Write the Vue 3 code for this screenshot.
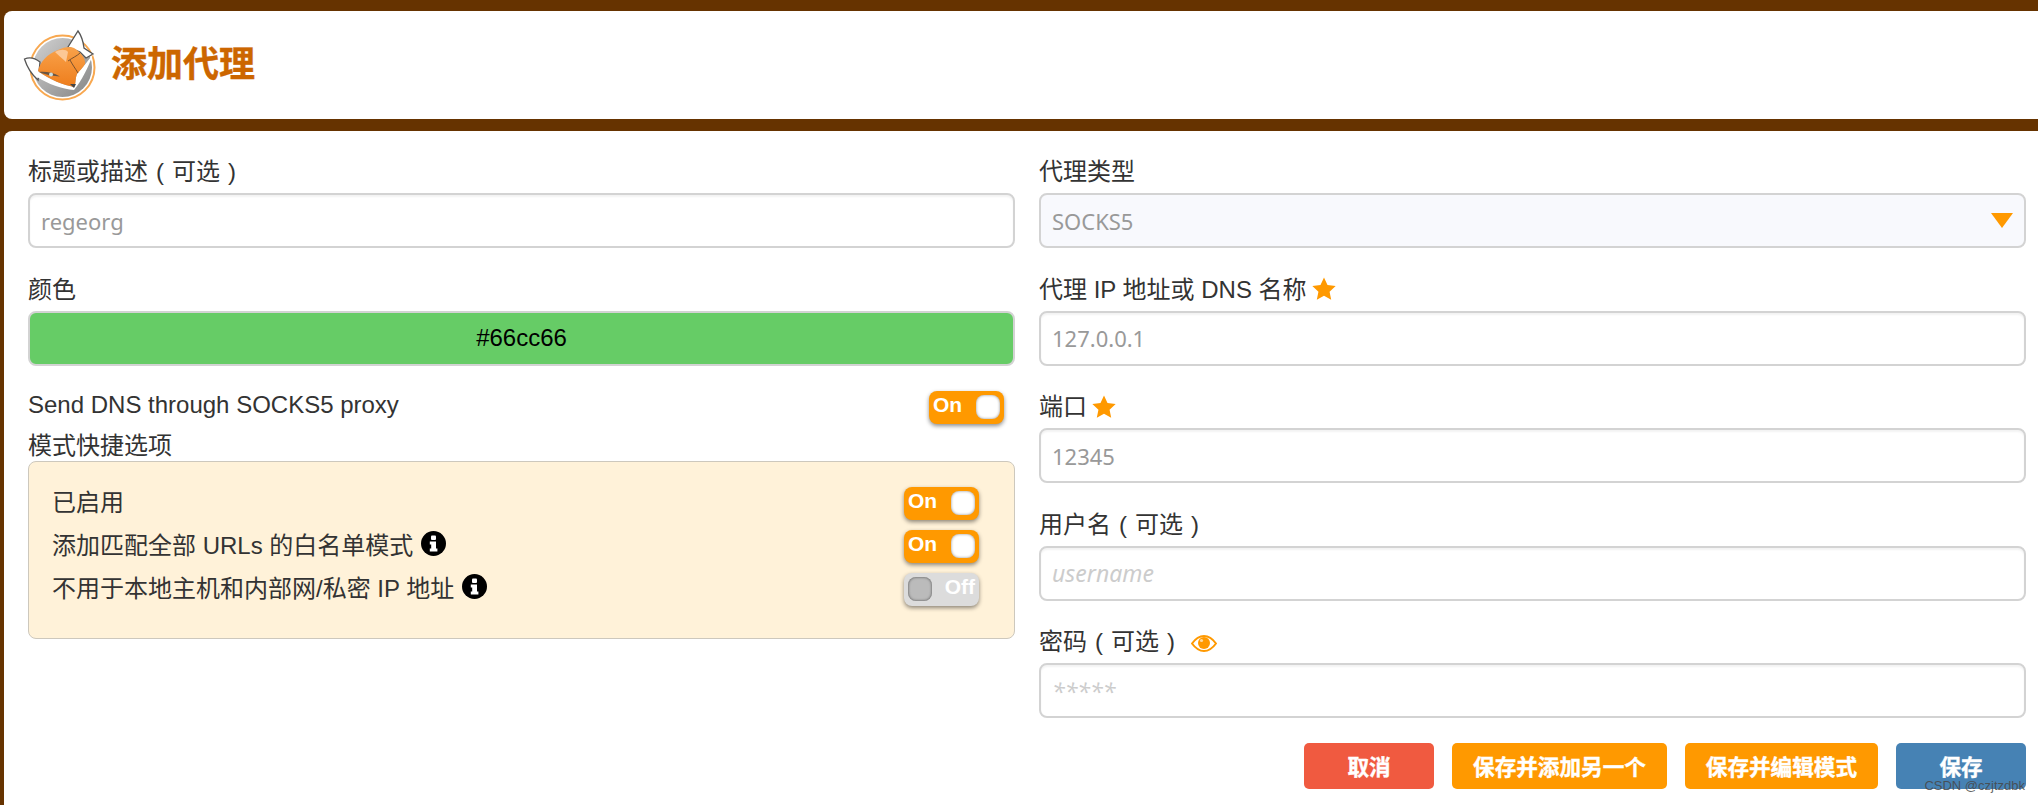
<script setup>
const shortcuts = [
  { label: '已启用', on: true, info: false },
  { label: '添加匹配全部 URLs 的白名单模式', on: true, info: true },
  { label: '不用于本地主机和内部网/私密 IP 地址', on: false, info: true }
]
</script>

<template>
  <div class="page">
    <header class="head">
      <svg class="logo" viewBox="20 26 76 74" width="76" height="74" aria-hidden="true">
        <defs>
          <linearGradient id="disc" x1="0" y1="0" x2="1" y2="1">
            <stop offset="0" stop-color="#d2d2d2" />
            <stop offset="1" stop-color="#858585" />
          </linearGradient>
          <linearGradient id="face" x1="0" y1="0" x2="0" y2="1">
            <stop offset="0" stop-color="#f9a24a" />
            <stop offset="1" stop-color="#ee7d1c" />
          </linearGradient>
        </defs>
        <circle cx="60.5" cy="65.5" r="32" fill="#fff" stroke="#f8a850" stroke-width="2" />
        <circle cx="60.5" cy="65.5" r="29.5" fill="url(#disc)" />
        <path d="M22.5 57 C27 55 33 56 38 60 L37 70 C37 75 36 77 36 78 C29 72 25 65 22.5 57Z" fill="#fff" stroke="#555" stroke-width="1.3" />
        <path d="M66 45 L76 29 C79 33 81 38 82 46 L91 52 L84 56 L78 50Z" fill="#fff" stroke="#555" stroke-width="1.3" />
        <path d="M91 52 C86 66 80 78 72 88 C60 87 46 82 35 75 L36 69 C48 78 62 83 72 85 C74 82 73 77 75 72 C78 68 84 62 91 52Z" fill="#fff" />
        <path d="M36 69 C38 60 45 52 56 48 C62 45 68 44 72 46 C78 50 84 56 83 62 C81 66 77 69 75 72 C73 77 74 82 72 85 C62 83 48 78 36 69Z" fill="url(#face)" />
        <path d="M53 50 C58 47 64 47 66 50 L64 60 C60 56 56 53 53 50Z" fill="#fcc896" />
        <path d="M66 59 C70 56 75 54 78 51 M76 71 C73 66 70 62 68 58" fill="none" stroke="#6b4a2c" stroke-width="0.9" />
        <path d="M37 70 C43 69.5 51 70 58 74.5 C52 74 45 73.5 37 70Z" fill="#6a5644" />
        <circle cx="49" cy="72.5" r="2" fill="#cfe0e0" />
        <path d="M68 82 L74 82 L72 86Z" fill="#444" />
      </svg>
      <h1 class="title">添加代理</h1>
    </header>

    <main class="main">
      <div class="form">
        <section class="col">
          <div class="field">
            <label class="lab">标题或描述<span class="par">(</span>可选<span class="par">)</span></label>
            <input class="inp" placeholder="regeorg" />
          </div>
          <div class="field">
            <label class="lab">颜色</label>
            <button class="color">#66cc66</button>
          </div>
          <div class="send">
            <span class="sendtext">Send DNS through SOCKS5 proxy</span>
            <span class="tog on"><b>On</b><i class="knob"></i></span>
          </div>
          <div class="boxlab">模式快捷选项</div>
          <div class="box">
            <div v-for="s in shortcuts" :key="s.label" class="row">
              <span class="rowtext">
                {{ s.label }}
                <svg v-if="s.info" class="info" viewBox="0 0 25 25" width="25" height="25" aria-hidden="true">
                  <circle cx="12.5" cy="12.5" r="12.5" fill="#000" />
                  <rect x="10" y="4.5" width="5" height="4.5" rx="1" fill="#fff" />
                  <path d="M8.8 10.5h6.2v7h1.4v3H8.8v-3h1.4v-4H8.8z" fill="#fff" />
                </svg>
              </span>
              <span class="tog" :class="s.on ? 'on' : 'off'">
                <template v-if="s.on"><b>On</b><i class="knob"></i></template>
                <template v-else><i class="knob"></i><b>Off</b></template>
              </span>
            </div>
          </div>
        </section>

        <section class="col">
          <div class="field">
            <label class="lab">代理类型</label>
            <div class="inp sel">SOCKS5<i class="arrow"></i></div>
          </div>
          <div class="field">
            <label class="lab">代理 IP 地址或 DNS 名称
              <svg class="star" viewBox="0 0 22 21" width="24" height="23" aria-hidden="true"><path d="M11 0.5l3.2 6.9 7.5.9-5.6 5.1 1.5 7.4L11 17.1l-6.6 3.7 1.5-7.4L.3 8.3l7.5-.9z" fill="#ff9900" /></svg>
            </label>
            <input class="inp" placeholder="127.0.0.1" />
          </div>
          <div class="field">
            <label class="lab">端口
              <svg class="star" viewBox="0 0 22 21" width="24" height="23" aria-hidden="true"><path d="M11 0.5l3.2 6.9 7.5.9-5.6 5.1 1.5 7.4L11 17.1l-6.6 3.7 1.5-7.4L.3 8.3l7.5-.9z" fill="#ff9900" /></svg>
            </label>
            <input class="inp" placeholder="12345" />
          </div>
          <div class="field">
            <label class="lab">用户名<span class="par">(</span>可选<span class="par">)</span></label>
            <input class="inp it" placeholder="username" />
          </div>
          <div class="field">
            <label class="lab">密码<span class="par">(</span>可选<span class="par">)</span>
              <svg class="eye" viewBox="0 0 26 17" width="26" height="17" aria-hidden="true">
                <path d="M1 8.5C5 3 9 1 13 1s8 2 12 7.5C21 14 17 16 13 16S5 14 1 8.5z" fill="#fff" stroke="#ff9900" stroke-width="2" />
                <circle cx="13" cy="8" r="6" fill="#ff9900" />
                <circle cx="10.5" cy="5.5" r="1.6" fill="#ffd9a0" />
              </svg>
            </label>
            <input class="inp it" placeholder="*****" />
          </div>
        </section>
      </div>

      <div class="actions">
        <button class="btn red">取消</button>
        <button class="btn org">保存并添加另一个</button>
        <button class="btn org">保存并编辑模式</button>
        <button class="btn blue">保存</button>
      </div>
    </main>
    <span class="mark">CSDN @czjtzdbk</span>
  </div>
</template>

<style>
html, body { margin: 0; background: #663300; height: 805px; overflow: hidden; }
</style>

<style scoped>
.page {
  position: relative;
  height: 805px;
  box-sizing: border-box;
  padding: 11px 0 0 4px;
  background: #663300;
  font-family: "Liberation Sans", "Noto Sans CJK SC", sans-serif;
  font-size: 24px;
  color: #333;
  overflow: hidden;
}
.head {
  height: 108px;
  display: flex;
  align-items: center;
  gap: 13px;
  padding-left: 18px;
  background: #fff;
  border-radius: 8px 0 0 8px;
}
.logo { flex: none; }
.title {
  margin: 0;
  font-size: 36px;
  font-weight: 700;
  line-height: 1;
  color: #cc6600;
  -webkit-text-stroke: 0.4px #cc6600;
}
.main {
  margin-top: 12px;
  height: 674px;
  box-sizing: border-box;
  padding: 23px 12px 0 24px;
  background: #fff;
  border-radius: 8px 0 0 0;
}
.form {
  display: grid;
  grid-template-columns: 1fr 1fr;
  gap: 24px;
}
.col { min-width: 0; }
.field { margin-bottom: 23.5px; }
.lab {
  display: flex;
  align-items: center;
  height: 39px;
  line-height: 36px;
  padding-bottom: 3px;
  box-sizing: border-box;
}
.par { display: inline-block; width: 24px; text-align: center; }
.star { margin-left: 5px; margin-top: -2px; }
.eye { margin-left: 8px; margin-top: 3px; }
.inp {
  display: block;
  width: 100%;
  height: 55px;
  box-sizing: border-box;
  padding: 0 11px;
  border: 2px solid #d3d3d3;
  border-radius: 8px;
  background: #fff;
  box-shadow: inset 0 2px 2px rgba(0, 0, 0, 0.05);
  font-family: "Noto Sans", "Noto Sans CJK SC", sans-serif;
  font-size: 22px;
  color: #999;
  outline: none;
}
.inp::placeholder { color: #999; opacity: 1; }
.it { font-style: italic; font-size: 23px; }
.it::placeholder { color: #ccc; }
.sel {
  display: flex;
  align-items: center;
  justify-content: space-between;
  background: #f8f9fd;
  box-shadow: none;
}
.arrow {
  width: 0;
  height: 0;
  border-left: 11px solid transparent;
  border-right: 11px solid transparent;
  border-top: 15px solid #ff9900;
}
.color {
  display: block;
  width: 100%;
  height: 55px;
  box-sizing: border-box;
  border: 2px solid #d3d3d3;
  border-radius: 8px;
  background: #66cc66;
  font-family: "Liberation Sans", sans-serif;
  font-size: 24px;
  color: #000;
  padding: 0;
}
.send {
  display: flex;
  align-items: center;
  justify-content: space-between;
  height: 36px;
  padding-right: 11px;
}
.sendtext { margin-top: -5px; }
.boxlab { height: 35.5px; line-height: 36px; padding-top: 3px; box-sizing: border-box; }
.box {
  height: 178px;
  box-sizing: border-box;
  padding: 20px 35px 0 23px;
  border: 1px solid #cdc8bd;
  border-radius: 8px;
  background: #fff2d9;
}
.row {
  display: flex;
  align-items: center;
  justify-content: space-between;
  height: 43px;
}
.rowtext { display: flex; align-items: center; gap: 8px; margin-top: -5px; }
.info { flex: none; margin-top: -1px; }
.tog {
  display: flex;
  align-items: center;
  justify-content: space-between;
  width: 75px;
  height: 33px;
  box-sizing: border-box;
  padding: 0 4px;
  border-radius: 8px;
  color: #fff;
  font-size: 21px;
  box-shadow: 0 2px 4px rgba(0, 0, 0, 0.45);
}
.tog b { font-weight: 700; margin-top: -4px; }
.on { background: #ff9900; }
.off { background: #dcdcdc; }
.knob {
  display: block;
  width: 24px;
  height: 24px;
  box-sizing: border-box;
  border-radius: 8px;
  background: #fff;
  box-shadow: inset 0 0 3px rgba(0, 0, 0, 0.45);
}
.off .knob { background: #bbb; box-shadow: inset 0 0 3px rgba(0, 0, 0, 0.6); }
.actions {
  display: flex;
  justify-content: flex-end;
  gap: 18px;
  margin-top: 1px;
}
.btn {
  height: 46px;
  min-width: 130px;
  box-sizing: border-box;
  padding: 0 21px;
  border: 0;
  border-radius: 5px;
  color: #fff;
  font-family: "Liberation Sans", "Noto Sans CJK SC", sans-serif;
  font-size: 21.6px;
  font-weight: 700;
  -webkit-text-stroke: 0.4px #fff;
}
.red { background: #f05a40; }
.org { background: #ff9900; }
.blue { background: #4682b4; }
.mark {
  position: absolute;
  right: 13px;
  bottom: 11px;
  font-family: "Liberation Sans", sans-serif;
  font-size: 13px;
  line-height: 16px;
  color: rgba(70, 70, 70, 0.85);
}
</style>
